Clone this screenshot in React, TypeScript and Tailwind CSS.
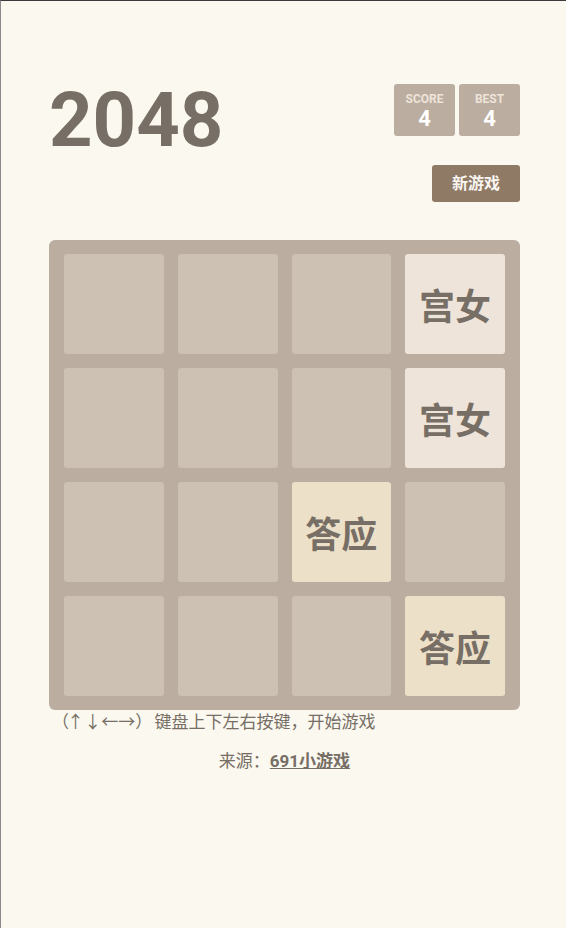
const tiles: (string | null)[] = [
  null, null, null, "宫女",
  null, null, null, "宫女",
  null, null, "答应", null,
  null, null, null, "答应",
]

const tileColor: Record<string, string> = {
  宫女: "bg-[#eee4da]",
  答应: "bg-[#ede0c8]",
}

function ScoreBox({ label, value }: { label: string; value: number }) {
  return (
    <div className="w-[61px] h-[52px] bg-[#bbada0] rounded-[3px] flex flex-col items-center pt-[8px]">
      <div className="text-[12px] leading-[14px] font-bold text-[#eee4da]">{label}</div>
      <div className="text-[22px] leading-[26px] font-bold text-white">{value}</div>
    </div>
  )
}

export default function App() {
  return (
    <div
      className="min-h-screen bg-[#faf8ef] border-t border-t-[#3a3a3a] border-l border-l-[#8a8a8a] text-[#776e65]"
      style={{ fontFamily: 'Roboto, "Noto Sans CJK SC", sans-serif' }}
    >
      <div className="ml-[48px] w-[471px] pt-[81px]">
        <div className="flex justify-between items-start">
          <h1 className="text-[76px] leading-none font-bold">2048</h1>
          <div className="flex flex-col items-end mt-[2px]">
            <div className="flex gap-[4px]">
              <ScoreBox label="SCORE" value={4} />
              <ScoreBox label="BEST" value={4} />
            </div>
            <button className="mt-[29px] w-[88px] h-[37px] bg-[#8f7a66] rounded-[3px] text-[#f9f6f2] text-[16px] font-bold">
              新游戏
            </button>
          </div>
        </div>

        <div className="mt-[38px] bg-[#bbada0] rounded-[6px] px-[15px] py-[14px] grid grid-cols-4 gap-[14px]">
          {tiles.map((t, i) => (
            <div
              key={i}
              className={`h-[100px] rounded-[3px] flex items-center justify-center pt-[8px] text-[36px] font-bold ${
                t ? tileColor[t] : "bg-[#cdc1b4]"
              }`}
            >
              {t}
            </div>
          ))}
        </div>

        <p className="text-[17px] leading-[24px] pl-[3px]">
          <span className="tracking-[-2px]">（↑ ↓</span>
          <span className="ml-[2px]">←→</span>
          <span className="tracking-[-2px]">）</span> 键盘上下左右按键，开始游戏
        </p>
        <p className="mt-[15px] text-[17px] leading-[24px] text-center">
          来源：<a className="font-bold underline">691小游戏</a>
        </p>
      </div>
    </div>
  )
}
